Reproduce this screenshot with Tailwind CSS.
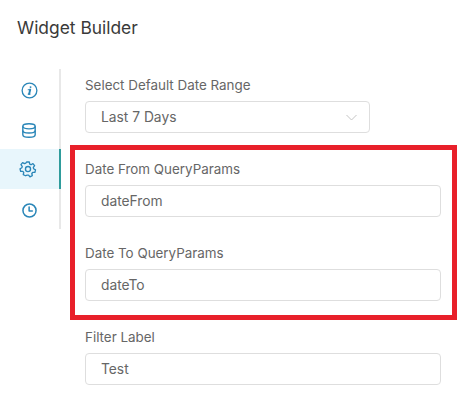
<!DOCTYPE html>
<html lang="en">
	<head>
		<meta charset="UTF-8" />
		<title>Widget Builder</title>
		<script src="https://cdn.jsdelivr.net/npm/@tailwindcss/browser@4"></script>
	</head>
	<body class="bg-white font-['Inter',sans-serif] overflow-hidden">
		<div class="relative w-[464px] h-[408px] overflow-hidden">
			<h1 class="pl-[17px] pt-[17px] h-[69px] text-[17.4px] leading-[22px] font-normal text-[#3a3a3a]">Widget Builder</h1>
			<div class="flex">
				<!-- tabs -->
				<div class="w-[61px] h-40 border-r-2 border-[#e8e8e8] text-[#2a86b8]">
					<div class="h-10 pt-[2px] flex items-center justify-center pr-[1px]">
						<svg class="w-[17px] h-[17px]" viewBox="0 0 18 18" fill="none" stroke="currentColor" stroke-width="1.4" stroke-linecap="round">
							<circle cx="9" cy="9" r="7.8" />
							<path d="M9.8 8 8.6 12.6" stroke-width="2" />
							<path d="M7.6 8.2h2.2M7.6 12.8h2" stroke-width="1.2" />
							<circle cx="10.1" cy="5.4" r="1" fill="currentColor" stroke="none" />
						</svg>
					</div>
					<div class="h-10 pt-[2px] flex items-center justify-center pr-[1px]">
						<svg class="w-4 h-[15px]" viewBox="0 0 18 17" fill="none" stroke="currentColor" stroke-width="1.6">
							<ellipse cx="9" cy="3.8" rx="7" ry="2.9" />
							<path d="M2 3.8v9.4c0 1.6 3.1 2.9 7 2.9s7-1.3 7-2.9V3.8" />
							<path d="M2 8.5c0 1.6 3.1 2.9 7 2.9s7-1.3 7-2.9" />
						</svg>
					</div>
					<div class="h-10 -mr-0.5 flex items-center justify-center pr-[3px] bg-[#e8f6fc] border-r-2 border-[#2f9c9c]">
						<svg class="w-[18px] h-[18px]" viewBox="0 0 24 24" fill="none" stroke="currentColor" stroke-width="1.8" stroke-linejoin="round">
							<path d="M10.3 2.6h3.4l.6 2.9 1.7.8 2.6-1.4 2.2 2.6-1.7 2.3.4 1.9 2.5 1.4-.8 3.3-2.9.1-1.2 1.5.6 2.9-3.1 1.5-1.9-2.3h-1.9L8.8 21l-3.1-1.5.6-2.9-1.2-1.5-2.9-.1-.8-3.3 2.5-1.4.4-1.9-1.7-2.3 2.2-2.6 2.6 1.4 1.7-.8z" />
							<circle cx="12" cy="12" r="3.4" />
						</svg>
					</div>
					<div class="h-10 pt-[2px] flex items-center justify-center pr-[1px]">
						<svg class="w-[15px] h-[15px]" viewBox="0 0 16 16" fill="none" stroke="currentColor" stroke-width="1.6" stroke-linecap="round" stroke-linejoin="round">
							<circle cx="8" cy="8" r="7" />
							<path d="M7.6 4.2v4.4h3.4" />
						</svg>
					</div>
				</div>
				<!-- form -->
				<div class="ml-6 flex flex-col text-[13.4px]">
					<label class="h-4 mt-2 leading-4 text-[#666]">Select Default Date Range</label>
					<div class="mt-2 w-[285px] h-8 px-[15px] flex items-center justify-between border border-[#dedede] rounded text-[#666] text-[13.8px]">
						<span>Last 7 Days</span>
						<svg class="w-[11px] h-[7px] -mr-[3px]" viewBox="0 0 11 7" fill="none" stroke="#c4c4c4" stroke-width="1"><path d="M.5 1 5.5 6l5-5" /></svg>
					</div>
					<label class="h-4 mt-7 leading-4 text-[#666]">Date From QueryParams</label>
					<input value="dateFrom" class="mt-2 w-[356px] h-8 px-[15px] border border-[#dedede] rounded text-[#666] text-[13.8px]" />
					<label class="h-4 mt-7 leading-4 text-[#666]">Date To QueryParams</label>
					<input value="dateTo" class="mt-2 w-[356px] h-8 px-[15px] border border-[#dedede] rounded text-[#666] text-[13.8px]" />
					<label class="h-4 mt-7 leading-4 text-[#666]">Filter Label</label>
					<input value="Test" class="mt-2 w-[356px] h-8 px-[15px] border border-[#dedede] rounded text-[#666] text-[13.8px]" />
				</div>
			</div>
			<!-- highlight box drawn over the form -->
			<div class="absolute left-[70px] top-[145px] w-[387px] h-[175px] border-[5px] border-[#e8202a]"></div>
		</div>
	</body>
</html>
